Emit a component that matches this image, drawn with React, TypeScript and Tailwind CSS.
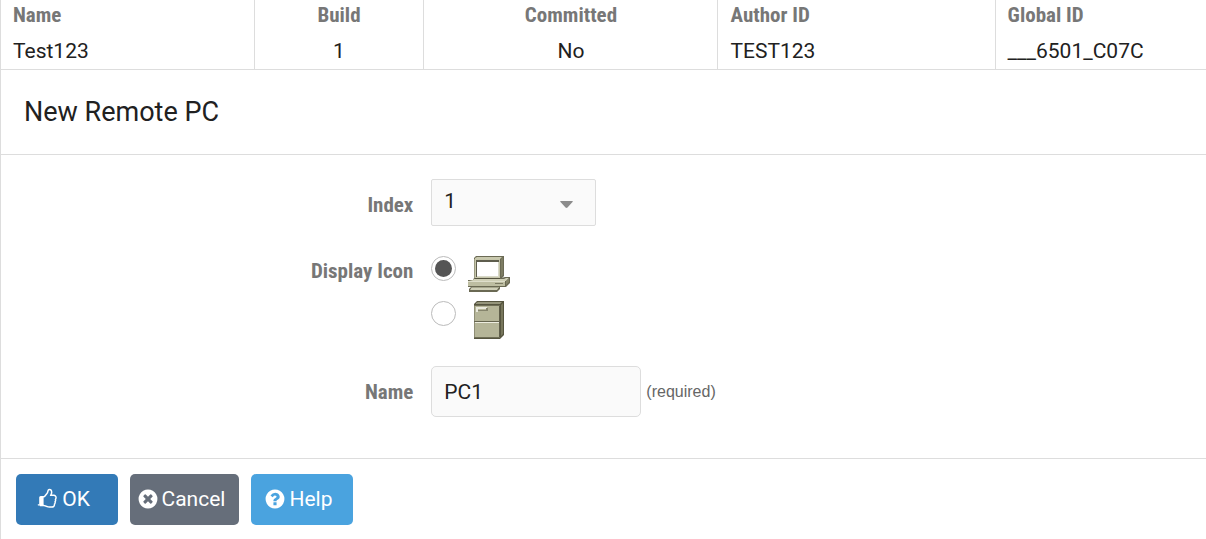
import type { ReactNode } from 'react';

type Column = {
  label: string;
  value: string;
  className: string;
};

const columns: Column[] = [
  { label: 'Name', value: 'Test123', className: 'w-[21%] text-left' },
  { label: 'Build', value: '1', className: 'w-[14.1%] text-center' },
  { label: 'Committed', value: 'No', className: 'w-[24.4%] text-center' },
  { label: 'Author ID', value: 'TEST123', className: 'w-[23%] text-left' },
  { label: 'Global ID', value: '___6501_C07C', className: 'text-left' }
];

const condensed =
  "font-['Roboto_Condensed','Liberation_Sans_Narrow',sans-serif] text-[21px] leading-7 font-bold text-[#777]";

const circle =
  'M1664 896q0 209-103 385.5t-279.5 279.5-385.5 103-385.5-103-279.5-279.5-103-385.5 103-385.5 279.5-279.5 385.5-103 385.5 103 279.5 279.5 103 385.5z';

type GlyphShape = {
  viewBox: string;
  d: string;
};

const thumbsUp: GlyphShape = {
  viewBox: '64 -64 1920 1920',
  d: 'M256 1408q0-26-19-45t-45-19-45 19-19 45 19 45 45 19 45-19 19-45zm1408-640q0-51-39-89.5t-89-38.5h-352q0-58 48-159.5t48-160.5q0-98-32-145t-128-47q-26 26-38 85t-30.5 125.5-59.5 109.5q-22 23-77 91-4 5-23 30t-31.5 41-34.5 42.5-40 44-38.5 35.5-40 27-35.5 9h-32v640h32q13 0 31.5 3t33 6.5 38 11 35 11.5 35.5 12.5 29 10.5q211 73 342 73h121q192 0 192-167 0-26-5-56 30-16 47.5-52.5t17.5-73.5-18-69q53-50 53-119 0-25-10-55.5t-25-47.5q32-1 53.5-47t21.5-81zm128-1q0 89-49 163 9 33 9 69 0 77-38 144 3 21 3 43 0 101-60 178 1 139-85 219.5t-227 80.5h-129q-96 0-189.5-22.5t-216.5-65.5q-116-40-138-40h-288q-53 0-90.5-37.5t-37.5-90.5v-640q0-53 37.5-90.5t90.5-37.5h274q36-24 137-155 58-75 107-128 24-25 35.5-85.5t30.5-126.5 62-108q39-37 90-37 84 0 151 32.5t102 101.5 35 186q0 93-48 192h176q104 0 180 76t76 179z'
};

const timesCircle: GlyphShape = {
  viewBox: '0 0 1792 1792',
  d:
    'M1277 1122q0-26-19-45l-181-181 181-181q19-19 19-45 0-27-19-46l-90-90q-19-19-46-19-26 0-45 19l-181 181-181-181q-19-19-45-19-27 0-46 19l-90 90q-19 19-19 46 0 26 19 45l181 181-181 181q-19 19-19 45 0 27 19 46l90 90q19 19 46 19 26 0 45-19l181-181 181 181q19 19 45 19 27 0 46-19l90-90q19-19 19-46z' +
    circle
};

const questionCircle: GlyphShape = {
  viewBox: '0 0 1792 1792',
  d:
    'M1024 1376v-192q0-14-9-23t-23-9h-192q-14 0-23 9t-9 23v192q0 14 9 23t23 9h192q14 0 23-9t9-23zm256-672q0-88-55.5-163t-138.5-116-170-41q-243 0-371 213-15 24 8 42l132 100q7 6 19 6 16 0 25-12 53-68 86-92 34-24 86-24 48 0 85.5 26t37.5 59q0 38-20 61t-68 45q-63 28-115.5 86.5t-52.5 125.5v36q0 14 9 23t23 9h192q14 0 23-9t9-23q0-19 21.5-49.5t54.5-49.5q32-18 49-28.5t46-35 44.5-48 28-60.5 12.5-81z' +
    circle
};

function Glyph({ viewBox, d }: GlyphShape) {
  return (
    <svg viewBox={viewBox} className="size-[22px] shrink-0" fill="currentColor" fillRule="evenodd" aria-hidden="true">
      <path d={d} />
    </svg>
  );
}

function ComputerIcon() {
  return (
    <svg viewBox="0 0 42 37" className="h-[37px] w-[42px]" aria-hidden="true">
      {/* monitor */}
      <path d="M6 2 8 0H36V20L33 23H6z" fill="#6b6a54" />
      <path d="M7 2 9 1H34L32 3H7z" fill="#c9c9ae" />
      <path d="M33 3 35 1V19L33 21z" fill="#7d7c63" />
      <path d="M6 3H32V22H6z" fill="#c6c6ab" />
      <path d="M6 3H7V22H6z" fill="#9b9b82" />
      <path d="M8 4H31V21H8z" fill="#5e5d4d" />
      <path d="M9 6H31V21H9z" fill="#d8d8c8" />
      <path d="M9 6H30V20H9z" fill="#fff" />
      {/* base unit */}
      <path d="M6 22H33L37 21H42V27L38 31H0V24H5z" fill="#6a6953" />
      <path d="M6 23H36L38 22H41L38 25H1L5 24z" fill="#cfcfb6" />
      <path d="M0 25H37V30H0z" fill="#bdbda1" />
      <path d="M0 25H37V26H0z" fill="#dedecb" />
      <path d="M38 25 41 22V26L38 29z" fill="#85846a" />
      <path d="M27 27H35V28H27z" fill="#7c7b64" />
      <path d="M7 22H32V23H7z" fill="#54533f" />
      {/* keyboard */}
      <path d="M3 31H32V33L29 36H1V33z" fill="#6a6953" />
      <path d="M4 31H31L29 34H2z" fill="#cfcfb8" />
      <path d="M4 31H31V32H4z" fill="#a5a58b" />
    </svg>
  );
}

function CabinetIcon() {
  return (
    <svg viewBox="0 0 42 38" className="h-[38px] w-[42px]" aria-hidden="true">
      <path d="M6 3 9 0H36V34L32 38H6z" fill="#56553f" />
      <path d="M8 2 10 1H34L32 3H8z" fill="#95957b" />
      <path d="M33 4 35 2V33L33 35z" fill="#77765c" />
      <path d="M6 4H32V37H6z" fill="#8f8e75" />
      <path d="M7 5H31V20H7zM7 23H31V36H7z" fill="#b5b598" />
      <path d="M6 4H32V5H6zM6 36H32V37H6z" fill="#6f6e57" />
      <path d="M31 5H32V36H31z" fill="#5f5e4a" />
      <path d="M6 20H32V21H6z" fill="#66654f" />
      <path d="M7 21H31V22H7z" fill="#ededdf" />
      <path d="M7 22H31V23H7z" fill="#b5b598" />
      <path d="M8 6H19V8H10V11H8z" fill="#e9e9dc" />
      <path d="M10 9H18V7H20V10H10z" fill="#85846c" />
    </svg>
  );
}

const iconOptions = [
  { id: 'icon-pc', label: 'Computer', icon: <ComputerIcon /> },
  { id: 'icon-cabinet', label: 'Cabinet', icon: <CabinetIcon /> }
];

function ActionButton({ className, glyph, children }: { className: string; glyph: GlyphShape; children: ReactNode }) {
  return (
    <button
      type="button"
      className={`flex h-[51px] items-center justify-center gap-[3px] rounded-[5px] pr-[7px] text-[21px] leading-7 text-white ${className}`}
    >
      <Glyph {...glyph} />
      {children}
    </button>
  );
}

export default function App() {
  return (
    <main className="border-l border-[#ddd] bg-white font-[Roboto,sans-serif] text-[#212121]">
      <table className="w-full table-fixed border-collapse text-[21px]">
        <thead>
          <tr>
            {columns.map((col) => (
              <th
                key={col.label}
                scope="col"
                className={`h-[33px] border-r border-[#ddd] px-3 pb-1 last:border-r-0 ${condensed} ${col.className}`}
              >
                {col.label}
              </th>
            ))}
          </tr>
        </thead>
        <tbody>
          <tr className="border-b border-[#ddd]">
            {columns.map((col) => (
              <td
                key={col.label}
                className={`h-9 border-r border-[#ddd] px-3 leading-7 last:border-r-0 ${col.className}`}
              >
                {col.value}
              </td>
            ))}
          </tr>
        </tbody>
      </table>

      <h1 className="border-b border-[#ddd] px-[23px] py-6 text-[27px] leading-9">New Remote PC</h1>

      <form>
        <div className="grid grid-cols-[5fr_9fr] gap-y-6 border-b border-[#ddd] pt-6 pb-[41px]">
          <label htmlFor="index" className={`pt-3 pr-[18px] text-right ${condensed}`}>
            Index
          </label>
          <div className="relative w-[165px]">
            <select
              id="index"
              defaultValue="1"
              className="h-[47px] w-full appearance-none rounded-[2px] border border-[#ddd] bg-[#fafafa] px-3 text-[21px]"
            >
              <option>1</option>
              <option>2</option>
              <option>3</option>
            </select>
            <svg viewBox="0 0 13 7" className="pointer-events-none absolute top-[22px] right-[23px] h-[7px] w-[13px]" aria-hidden="true">
              <path d="M0.500 0H12.500Q13 0.500 12.500 1L7.500 6.500Q6.500 7.300 5.500 6.500L0.500 1Q0 0.500 0.500 0Z" fill="#8c8c8c" />
            </svg>
          </div>

          <span id="icon-label" className={`pt-[7px] pr-[18px] text-right ${condensed}`}>
            Display Icon
          </span>
          <div role="radiogroup" aria-labelledby="icon-label" className="flex flex-col gap-2 pt-1.5 pb-[3px]">
            {iconOptions.map((option, i) => (
              <div key={option.id} className="flex items-start gap-3">
                <input
                  id={option.id}
                  type="radio"
                  name="icon"
                  defaultChecked={i === 0}
                  className="size-[25px] appearance-none rounded-full border border-[#bbb] bg-white bg-clip-content p-[3px] checked:bg-[#555]"
                />
                <label htmlFor={option.id} aria-label={option.label}>
                  {option.icon}
                </label>
              </div>
            ))}
          </div>

          <label htmlFor="name" className={`pt-3 pr-[18px] text-right ${condensed}`}>
            Name
          </label>
          <div className="flex items-center gap-[5px]">
            <input
              id="name"
              type="text"
              defaultValue="PC1"
              required
              className="h-[51px] w-[210px] rounded-[5px] border border-[#ddd] bg-[#fafafa] px-3 pt-0.5 text-[21px]"
            />
            <span className="pt-px font-['Liberation_Sans',sans-serif] text-base text-[#666]">(required)</span>
          </div>
        </div>

        <div className="flex gap-3 px-[15px] pt-[15px] pb-3.5">
          <ActionButton className="w-[102px] bg-[#337ab7]" glyph={thumbsUp}>
            OK
          </ActionButton>
          <ActionButton className="w-[109px] bg-[#666e7a]" glyph={timesCircle}>
            Cancel
          </ActionButton>
          <ActionButton className="w-[102px] bg-[#4aa3df]" glyph={questionCircle}>
            Help
          </ActionButton>
        </div>
      </form>
    </main>
  );
}
